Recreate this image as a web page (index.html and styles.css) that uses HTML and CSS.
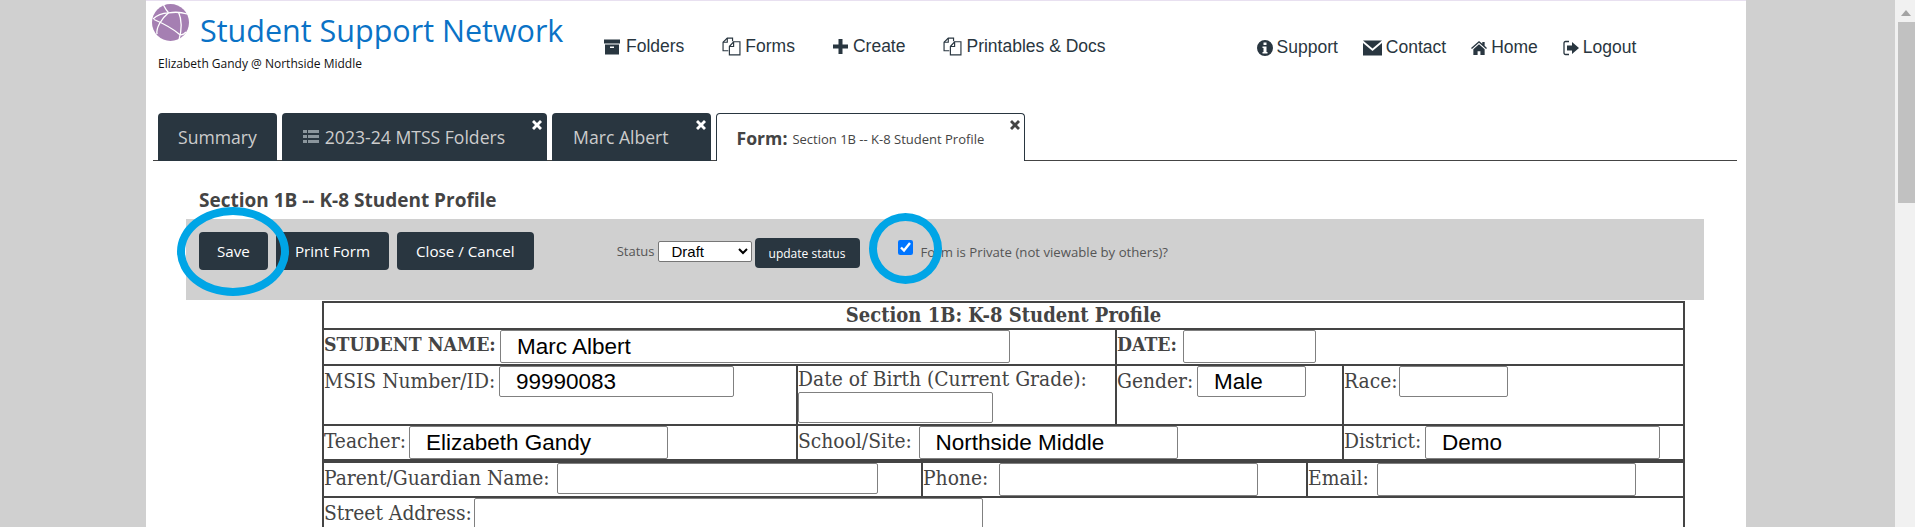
FILE: index.html
```html
<!DOCTYPE html>
<html lang="en">
<head>
<meta charset="utf-8">
<title>Student Support Network</title>
<link rel="stylesheet" href="styles.css">
</head>
<body>
<div class="viewport">
  <div class="sheet">
    <header class="header">
      <div class="brand">
        <div class="brand-top">
          <svg class="logo" viewBox="0 0 37 37"><circle cx="18.5" cy="18.5" r="18.5" fill="#a57fb2"/><g fill="none" stroke="#fff" stroke-width="1.3"><path d="M1 15 C6 10 12 9 16.5 8.8 C22 8 28 7.5 35 10"/><path d="M16.5 8.8 C14 6 12.500 3 11.500 1"/><path d="M26.500 8 C30 16 29.500 27 27 36"/><path d="M2 15.500 C10 19 20 24 27 30 C29 31.500 32 30 34 28"/><path d="M16.500 8.800 C9 15 4 24 5 30"/></g></svg>
          <span class="brand-title">Student Support Network</span>
        </div>
        <div class="brand-user">Elizabeth Gandy @ Northside Middle</div>
      </div>
      <nav class="nav nav-main">
        <a class="nav-item"><svg class="icon icon-box" viewBox="0 0 16 15"><path d="M0 0h16v4H0zM1 5h14v10H1zM6 7v1.500h4V7z" fill-rule="evenodd"/></svg>Folders</a>
        <a class="nav-item"><svg class="icon icon-wide" viewBox="0 0 18 18"><g fill="none" stroke="#293640" stroke-width="1.100"><path d="M6 13H1V5l4-4h5v3"/><path d="M5 1v4H1"/><path d="M7 9l4-4.500h6V17H7z"/><path d="M11 4.500V9H7"/></g></svg>Forms</a>
        <a class="nav-item"><svg class="icon icon-plus" viewBox="0 0 15 15"><path d="M5.500 0h4v5.500H15v4H9.500V15h-4V9.500H0v-4h5.500z"/></svg>Create</a>
        <a class="nav-item"><svg class="icon icon-wide" viewBox="0 0 18 18"><g fill="none" stroke="#293640" stroke-width="1.100"><path d="M6 13H1V5l4-4h5v3"/><path d="M5 1v4H1"/><path d="M7 9l4-4.500h6V17H7z"/><path d="M11 4.500V9H7"/></g></svg>Printables &amp; Docs</a>
      </nav>
      <nav class="nav nav-side">
        <a class="nav-item"><svg class="icon" viewBox="0 0 16 16"><path fill-rule="evenodd" d="M8 0a8 8 0 1 1 0 16A8 8 0 0 1 8 0zM6.500 2.500v2.500h3V2.500zM5.500 6.500v1.500h1v4h-1v1.500h5V12h-1V6.500z"/></svg>Support</a>
        <a class="nav-item"><svg class="icon icon-mail" viewBox="0 0 19 15"><path d="M0 0h19L9.500 8zM0 2.500l9.500 8 9.500-8V15H0z"/></svg>Contact</a>
        <a class="nav-item"><svg class="icon" viewBox="0 0 17 15"><path d="M8.500 0l3.500 3V1h2.500v4.200L17 7.500l-1 1-7.500-6.500L1 8.500l-1-1zM8.500 3.500L14.500 8.700V15H10v-4H7v4H2.500V8.700z"/></svg>Home</a>
        <a class="nav-item"><svg class="icon" viewBox="0 0 16 15"><path d="M6 1H2.500A1.500 1.500 0 0 0 1 2.500v10A1.500 1.500 0 0 0 2.500 14H6" fill="none" stroke="#293640" stroke-width="1.300"/><path d="M9 1.500l7 6-7 6V10H4V5h5z"/></svg>Logout</a>
      </nav>
    </header>

    <div class="tabs">
      <a class="tab tab-plain">Summary</a>
      <a class="tab"><svg class="tab-icon" viewBox="0 0 16 14"><path d="M0 0h4v3H0zM5 0h11v3H5zM0 5h4v3H0zM5 5h11v3H5zM0 10h4v3H0zM5 10h11v3H5z"/></svg>2023-24 MTSS Folders<svg class="tab-close" viewBox="0 0 10 10"><path d="M2 0l3 3 3-3 2 2-3 3 3 3-2 2-3-3-3 3-2-2 3-3-3-3z"/></svg></a>
      <a class="tab">Marc Albert<svg class="tab-close" viewBox="0 0 10 10"><path d="M2 0l3 3 3-3 2 2-3 3 3 3-2 2-3-3-3 3-2-2 3-3-3-3z"/></svg></a>
      <a class="tab tab-active"><b>Form:</b><span class="tab-sub">Section 1B -- K-8 Student Profile</span><svg class="tab-close" viewBox="0 0 10 10"><path d="M2 0l3 3 3-3 2 2-3 3 3 3-2 2-3-3-3 3-2-2 3-3-3-3z"/></svg></a>
    </div>

    <h1 class="form-title">Section 1B -- K-8 Student Profile</h1>

    <div class="toolbar">
      <button class="btn btn-save">Save</button>
      <button class="btn">Print Form</button>
      <button class="btn">Close / Cancel</button>
      <span class="status-label">Status</span>
      <select class="status-select"><option>Draft</option></select>
      <button class="btn-small">update status</button>
      <input class="private-check" type="checkbox" checked>
      <span class="private-label">Form is Private (not viewable by others)?</span>
      <span class="ring ring-save"></span>
      <span class="ring ring-check"></span>
    </div>

    <div class="form-area">
      <table class="grid">
        <colgroup><col class="c1"><col class="c2"><col class="c3"><col class="c4"></colgroup>
        <tr class="r-title"><td colspan="4" class="title-cell">Section 1B: K-8 Student Profile</td></tr>
        <tr class="r-name">
          <td colspan="2"><div class="field"><b class="l-student">STUDENT NAME:</b><input class="in in-name" value="Marc Albert"></div></td>
          <td colspan="2"><div class="field"><b class="l-date">DATE:</b><input class="in in-date"></div></td>
        </tr>
        <tr class="r-ids">
          <td><div class="field"><span class="l-msis">MSIS Number/ID:</span><input class="in in-msis" value="99990083"></div></td>
          <td><div class="dob">Date of Birth (Current Grade):</div><input class="in in-dob"></td>
          <td><div class="field"><span class="l-gender">Gender:</span><input class="in in-gender" value="Male"></div></td>
          <td><div class="field"><span class="l-race">Race:</span><input class="in in-gender"></div></td>
        </tr>
        <tr class="r-staff">
          <td><div class="field"><span class="l-teacher">Teacher:</span><input class="in in-staff" value="Elizabeth Gandy"></div></td>
          <td colspan="2"><div class="field"><span class="l-school">School/Site:</span><input class="in in-staff" value="Northside Middle"></div></td>
          <td><div class="field"><span class="l-district">District:</span><input class="in in-district" value="Demo"></div></td>
        </tr>
      </table>
      <table class="grid">
        <colgroup><col class="d1"><col class="d2"><col class="d3"></colgroup>
        <tr class="r-parent">
          <td><div class="field"><span class="l-parent">Parent/Guardian Name:</span><input class="in in-parent"></div></td>
          <td><div class="field"><span class="l-phone">Phone:</span><input class="in in-staff"></div></td>
          <td><div class="field"><span class="l-email">Email:</span><input class="in in-staff"></div></td>
        </tr>
        <tr class="r-street">
          <td colspan="3"><div class="field"><span class="l-street">Street Address:</span><input class="in in-street"></div></td>
        </tr>
      </table>
    </div>
  </div>
  <div class="scrollbar"><span class="scroll-up"></span><span class="scroll-thumb"></span></div>
</div>
</body>
</html>
```

FILE: styles.css
```css
* { box-sizing: border-box; }
html, body { margin: 0; height: 100%; overflow: hidden; }
body { font-family: "Open Sans", sans-serif; background: #d0d0d0; color: #444; }

.viewport { display: flex; height: 527px; overflow: hidden; padding-left: 146px; }
.sheet { width: 1600px; flex: none; background: #fff; border-top: 1px solid #e8e0f0; height: 527px; overflow: hidden; }
.scrollbar { margin-left: auto; width: 20px; flex: none; background: #f1f1f1; display: flex; flex-direction: column; align-items: center; padding-left: 2px; }
.scroll-up { margin-top: 10px; width: 0; height: 0; border-left: 5px solid transparent; border-right: 5px solid transparent; border-bottom: 6px solid #a3a3a3; }
.scroll-thumb { margin-top: 6px; width: 17px; height: 181px; background: #c1c1c1; }

.header { height: 112px; display: flex; align-items: flex-start; }
.brand { width: 458px; flex: none; padding: 3px 0 0 6px; }
.brand-top { display: flex; align-items: flex-start; }
.logo { width: 37px; height: 37px; flex: none; }
.brand-title { margin: 5px 0 0 11px; font-size: 30.5px; line-height: 42px; color: #0a72c6; white-space: nowrap; }
.brand-user { margin: 5px 0 0 6px; font-size: 12px; line-height: 16px; color: #111; }

.nav { display: flex; font-family: "Liberation Sans", Arial, sans-serif; font-size: 17.5px; color: #293640; }
.nav-item { display: flex; align-items: center; white-space: nowrap; }
.nav-main { gap: 38px; padding-top: 35px; }
.nav-side { gap: 25px; padding-top: 36px; margin-left: 151px; }
.icon { width: 16px; height: 16px; margin-right: 4px; fill: #293640; flex: none; }
.icon-box { margin-right: 6px; }
.icon-plus { width: 15px; height: 15px; margin-right: 5px; }
.icon-wide { width: 19px; height: 19px; margin-right: 4px; }
.icon-mail { width: 19px; margin-right: 4px; }

.tabs { margin: 0 9px 0 7px; padding-left: 5px; height: 48px; display: flex; gap: 5px; border-bottom: 1px solid #444; }
.tab { position: relative; height: 48px; padding: 0 42px 0 21px; display: flex; align-items: center; background: #293640; color: #ccc; font-size: 17.6px; border-radius: 4px 4px 0 0; white-space: pre; }
.tab-plain { padding: 0 20px; }
.tab-icon { width: 16px; height: 14px; margin-right: 6px; fill: #8b969d; }
.tab-active { background: #fff; color: #444; border: 1px solid #293640; border-bottom: none; padding-left: 20px; padding-right: 40px; }
.tab-sub { font-size: 13px; padding-top: 2px; margin-left: 5px; }
.tab-close { position: absolute; top: 7px; right: 5px; width: 10px; height: 10px; fill: #fff; }
.tab-active .tab-close { fill: #444; right: 4px; top: 6px; }

.form-title { margin: 0 0 0 53px; height: 58px; padding-top: 26px; font-size: 19px; line-height: 26px; font-weight: 700; color: #444; }

.toolbar { position: relative; margin: 0 42px 0 40px; height: 81px; padding: 13px 0 0 13px; background: #d0d0d0; display: flex; align-items: flex-start; }
.btn { height: 38px; padding: 0 19px; border: 0; border-radius: 4px; background: #293640; color: #fff; font: 15.2px "Open Sans", sans-serif; margin-right: 8px; }
.btn-save { padding: 0 18px; }
.status-label { margin: 10px 3px 0 75px; font-size: 13px; line-height: 18px; color: #555; }
.status-select { margin-top: 9px; width: 94px; height: 21px; font: 15px "Liberation Sans", Arial, sans-serif; padding-left: 9px; background: #fff; border: 1px solid #767676; border-radius: 2px; color: #000; }
.btn-small { margin: 6px 0 0 3px; width: 105px; height: 30px; border: 0; border-radius: 4px; background: #293640; color: #fff; font: 12px "Open Sans", sans-serif; padding: 0; }
.private-check { margin: 8px 0 0 38px; width: 15px; height: 15px; flex: none; }
.private-label { margin: 11px 0 0 8px; font-size: 13.2px; line-height: 18px; color: #555; }
.ring { position: absolute; border: 8px solid #00a5e6; border-radius: 50%; }
.ring-save { left: -9px; top: -12px; width: 112px; height: 89px; }
.ring-check { left: 683px; top: -6px; width: 73px; height: 71px; }

.form-area { margin: 1px 0 0 176px; width: 1361px; font-family: "DejaVu Serif Condensed", "DejaVu Serif", serif; font-size: 20.8px; color: #444; }
.grid { width: 1361px; table-layout: fixed; border-collapse: collapse; }
.grid td { border: 2px solid #444; padding: 0; vertical-align: top; }
.c1 { width: 474px; } .c2 { width: 319px; } .c3 { width: 227px; } .c4 { width: 341px; }
.d1 { width: 599px; } .d2 { width: 385px; } .d3 { width: 377px; }
.r-title { height: 27px; }
.r-name { height: 36px; }
.r-ids { height: 60px; }
.r-staff { height: 34px; }
.r-parent { height: 34px; }
.r-street { height: 60px; }
.title-cell { text-align: center; font-weight: 700; font-size: 20px; line-height: 24px; }
.field { display: flex; align-items: flex-start; line-height: 30px; white-space: nowrap; }
.field b { font-size: 19.3px; }
.field b, .field span { flex: none; }
.l-student { width: 176px; } .l-date { width: 65.5px; } .l-msis { width: 175px; }
.l-gender { width: 80px; } .l-race { width: 55px; } .l-teacher { width: 85px; }
.l-school { width: 120.5px; } .l-district { width: 81px; } .l-parent { width: 233px; }
.l-phone { width: 76px; } .l-email { width: 69px; } .l-street { width: 150px; }
.dob { line-height: 26px; }
.in { height: 31px; padding: 0 16px; border: 1px solid #808080; border-radius: 2px; font: 22.5px "Liberation Sans", Arial, sans-serif; color: #000; background: #fff; display: block; }
.in-name { width: 510px; height: 33px; }
.in-date { width: 133px; height: 33px; }
.in-msis { width: 234.5px; }
.in-dob { width: 195px; }
.in-gender { width: 109px; }
.in-staff { width: 259px; height: 33px; }
.in-district { width: 234.5px; height: 33px; }
.in-parent { width: 321px; }
.in-street { width: 508.5px; height: 40px; }
```
